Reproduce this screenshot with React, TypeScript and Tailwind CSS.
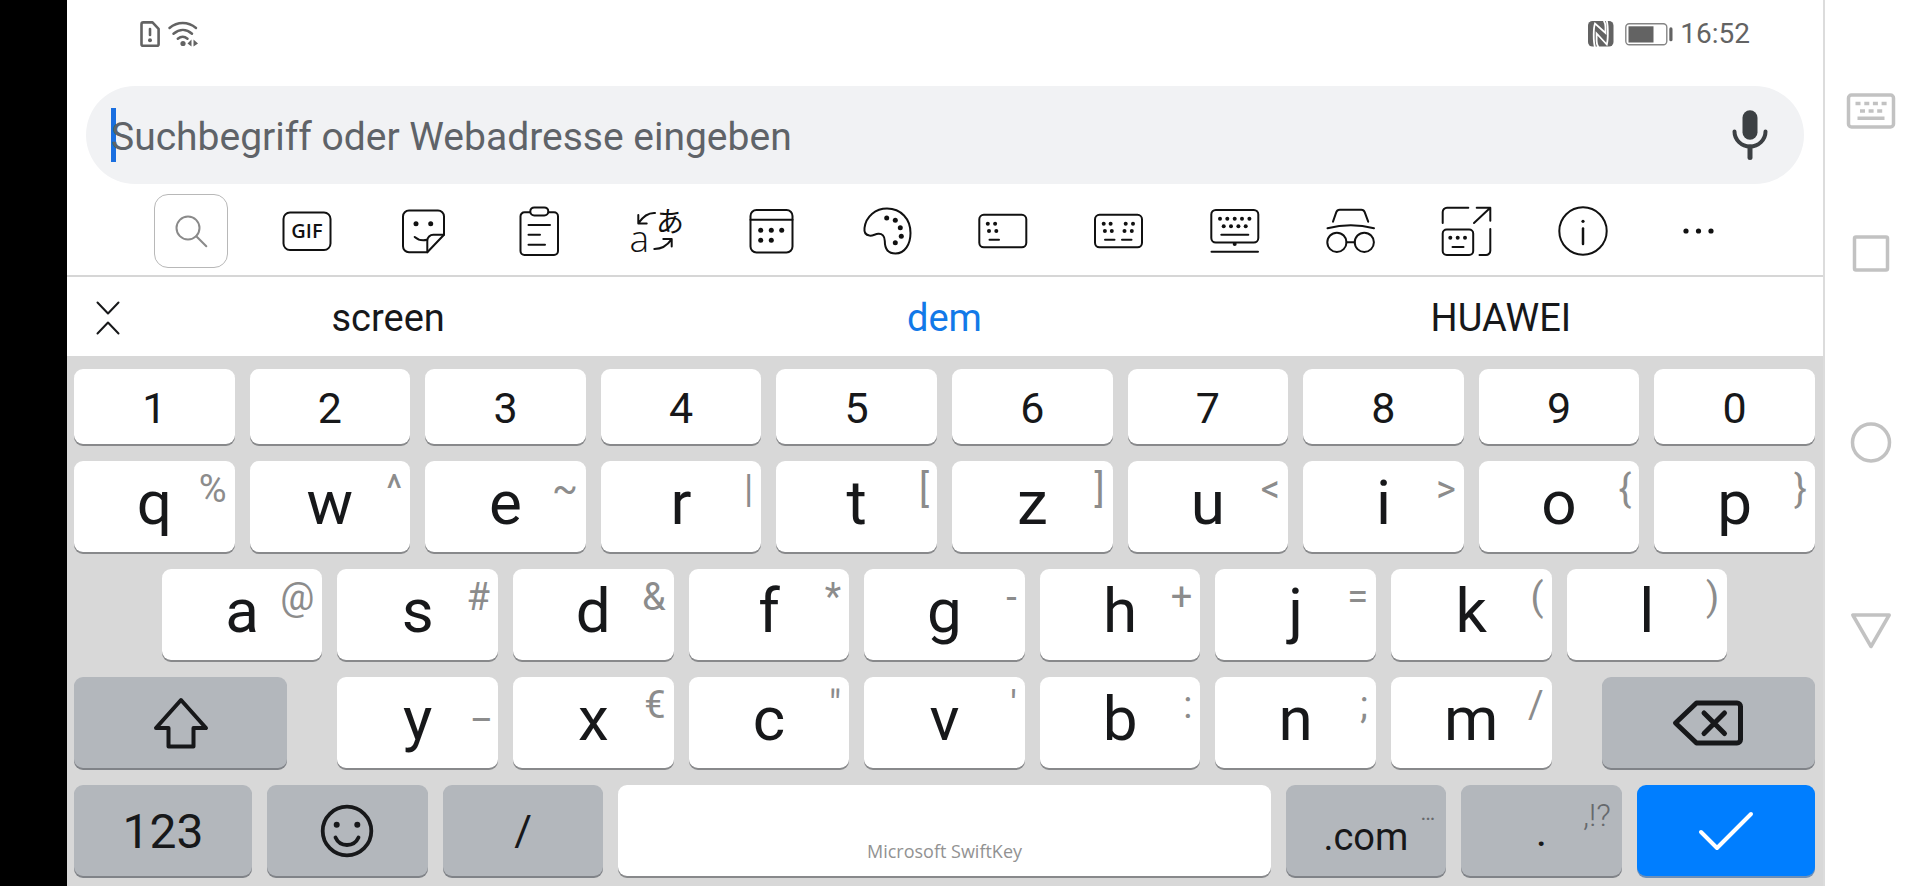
import type { ReactNode } from "react";

type Hint = { text: string; className?: string };

function Icon({ w = 54, h = 54, sw = 2, children }: { w?: number; h?: number; sw?: number; children: ReactNode }) {
  return (
    <svg
      width={w}
      height={h}
      viewBox={`0 0 ${w} ${h}`}
      fill="none"
      stroke="currentColor"
      strokeWidth={sw}
      strokeLinecap="round"
      strokeLinejoin="round"
      aria-hidden="true"
      className="shrink-0 overflow-visible"
    >
      {children}
    </svg>
  );
}

function Dots({ points, r = 2 }: { points: number[][]; r?: number }) {
  return (
    <g fill="currentColor" stroke="none">
      {points.map(([x, y]) => (
        <circle key={`${x}-${y}`} cx={x} cy={y} r={r} />
      ))}
    </g>
  );
}

const tools: { label: string; icon: ReactNode }[] = [
  {
    label: "GIF",
    icon: (
      <Icon>
        <rect x="3.5" y="8.5" width="47" height="37.5" rx="6.5" />
        <text
          x="27"
          y="34.2"
          textAnchor="middle"
          fill="currentColor"
          stroke="none"
          className="font-['Open_Sans',sans-serif] text-[20px] font-semibold"
        >
          GIF
        </text>
      </Icon>
    ),
  },
  {
    label: "Sticker",
    icon: (
      <Icon>
        <path d="M31.3 48.3H13a6 6 0 0 1-6-6V12.5a6 6 0 0 1 6-6h29a6 6 0 0 1 6 6v18.3z" />
        <path d="M48 30.8H37.3a6 6 0 0 0-6 6v11.5" />
        <path d="M18.7 33c3 2.6 7.5 4 12.3 2.8" />
        <Dots points={[[20, 19.7], [34.7, 19.7]]} r={2.5} />
      </Icon>
    ),
  },
  {
    label: "Zwischenablage",
    icon: (
      <Icon>
        <path d="M18 8.3h-5.5a4 4 0 0 0-4 4V47a4 4 0 0 0 4 4h29.5a4 4 0 0 0 4-4V12.3a4 4 0 0 0-4-4h-5.5" />
        <rect x="18.3" y="3.4" width="18" height="8" rx="4" />
        <path d="M16.5 21H38M16.5 30.7H28M16.5 40.7H33" />
      </Icon>
    ),
  },
  {
    label: "Übersetzer",
    icon: (
      <Icon>
        <text
          x="1.5"
          y="47.7"
          fill="currentColor"
          stroke="none"
          className="font-['Open_Sans',sans-serif] text-[37px] leading-none font-light"
        >
          a
        </text>
        <text
          x="42"
          y="28"
          textAnchor="middle"
          fill="currentColor"
          stroke="none"
          className="font-['Noto_Sans_CJK_JP',sans-serif] text-[28px] leading-none"
        >
          あ
        </text>
        <path d="M27 9C19 8.5 14 14 10.6 19M10.3 11v8.5h8.4" />
        <path d="M26.3 45c8 0 13-3.5 17.2-9.600M35.3 35h8.4v7.5" />
      </Icon>
    ),
  },
  {
    label: "Kalender",
    icon: (
      <Icon>
        <rect x="6.5" y="6" width="42" height="42.5" rx="6" />
        <path d="M6.5 15.7h42" />
        <Dots points={[[16.7, 26.3], [27.3, 26.3], [37.7, 26.3], [16.7, 36.3], [27.3, 36.3]]} r={2.5} />
      </Icon>
    ),
  },
  {
    label: "Designs",
    icon: (
      <Icon>
        <path d="M4.5 24C6 12 16 4.5 27 4.5c14 0 23.5 10.5 23.5 24.5 0 11-5.5 20.5-15 20.5-8.5 0-10.7-6.5-10.7-12.5 0-5-2.8-7.5-6.5-7.2-3.3.2-5.3 2.2-8.8 1.800-4-.6-5.5-3.6-5-7.6z" />
        <Dots points={[[26.7, 14], [35.3, 16.3], [40.3, 23.7], [41.3, 32.3], [35.3, 38.7]]} r={2.5} />
      </Icon>
    ),
  },
  {
    label: "Einhandmodus",
    icon: (
      <Icon>
        <rect x="3.3" y="10.8" width="47" height="32.5" rx="4.5" />
        <Dots points={[[11.8, 19.7], [19.1, 19.7], [13, 27], [20.3, 27]]} />
        <path d="M13.5 35.7h9.5" />
      </Icon>
    ),
  },
  {
    label: "Geteilte Tastatur",
    icon: (
      <Icon>
        <rect x="3" y="10.8" width="47" height="32.5" rx="4.5" />
        <Dots
          points={[[11.7, 19.7], [18.6, 19.7], [33.7, 19.7], [41, 19.7], [12.9, 27], [19.8, 27], [32.5, 27], [39.8, 27]]}
        />
        <path d="M13 35.7h9.5M30 35.7h9.5" />
      </Icon>
    ),
  },
  {
    label: "Tastaturlayout",
    icon: (
      <Icon>
        <rect x="3.3" y="6" width="47" height="32.5" rx="4.5" />
        <Dots
          points={[[12, 14.7], [19.3, 14.7], [26.7, 14.7], [34, 14.7], [41.4, 14.7], [15.7, 22.3], [23, 22.3], [30.4, 22.3], [37.7, 22.3], [26.7, 40]]}
        />
        <path d="M13.3 30.7h27M3.5 47.7h46.5" />
      </Icon>
    ),
  },
  {
    label: "Inkognito",
    icon: (
      <Icon>
        <path d="M9 17.7l3.3-9.5a3.6 3.6 0 0 1 3.4-2.4h21.6a3.6 3.6 0 0 1 3.4 2.4l3.5 9.5" />
        <path d="M3.5 24.3c15-3.8 31.5-3.8 46.5 0" />
        <circle cx="12.9" cy="38.3" r="9.6" />
        <circle cx="40.3" cy="38.3" r="9.6" />
        <path d="M22.5 38.3h8.2" />
      </Icon>
    ),
  },
  {
    label: "Größe ändern",
    icon: (
      <Icon>
        <path d="M2.7 19V8a4.3 4.3 0 0 1 4.3-4.3h21.3M36.7 3.7h13.6v13M50 4L34 19M50.3 25v21.7a4.3 4.3 0 0 1-4.3 4.3h-6.5" />
        <rect x="2.7" y="25.5" width="30.5" height="25.5" rx="4" />
        <Dots points={[[10.3, 33.7], [17.7, 33.7], [25, 33.7]]} />
        <path d="M12.5 43h11" />
      </Icon>
    ),
  },
  {
    label: "Info",
    icon: (
      <Icon>
        <circle cx="27" cy="27" r="23.7" />
        <path d="M27 24.5v15.5" strokeWidth="2.5" />
        <Dots points={[[27, 17.3]]} r={1.6} />
      </Icon>
    ),
  },
  {
    label: "Mehr",
    icon: (
      <Icon>
        <Dots points={[[14, 27], [26.5, 27], [39, 27]]} r={2.6} />
      </Icon>
    ),
  },
];

const keyBase = "relative flex h-full w-full items-center justify-center rounded-[9px] leading-none";
const keyTone = {
  light: "bg-white text-[#17181a] shadow-[0_2px_0_#88898b]",
  dark: "bg-[#b3b7bc] text-[#17181a] shadow-[0_2px_0_#808388]",
  accent: "bg-[#007eff] text-white shadow-[0_2px_0_#6d8fb8]",
};

function Key({
  width = "w-[10%]",
  tone = "light",
  label,
  hint,
  className = "",
  children,
}: {
  width?: string;
  tone?: keyof typeof keyTone;
  label?: string;
  hint?: Hint;
  className?: string;
  children: ReactNode;
}) {
  return (
    <div className={`${width} pr-2 pl-[7px]`}>
      <button type="button" aria-label={label} className={`${keyBase} ${keyTone[tone]} ${className}`}>
        {children}
        {hint && (
          <span className={`absolute ${hint.className ?? "top-[9px] right-2 text-[38px] text-[#8c8c8c]"}`}>
            {hint.text}
          </span>
        )}
      </button>
    </div>
  );
}

function LetterKeys({ letters, hints, width }: { letters: string; hints: string; width?: string }) {
  return (
    <>
      {letters.split("").map((letter, i) => (
        <Key key={letter} width={width} hint={{ text: hints[i] }} className="pb-[7px] text-[62px]">
          {letter}
        </Key>
      ))}
    </>
  );
}

function StatusBar() {
  return (
    <header className="flex h-[66px] items-center justify-between px-[73px] pt-0.5 text-[#636363]">
      <div className="flex items-center gap-2">
        <Icon w={20} h={26} sw={2.6}>
          <path d="M3.3 1.4h9.2l6.1 6.4v15.4a1.5 1.5 0 0 1-1.5 1.5H3a1.5 1.5 0 0 1-1.5-1.5V3.2a1.8 1.8 0 0 1 1.800-1.8z" />
          <path d="M10 8v6" />
          <Dots points={[[10, 19.3]]} />
        </Icon>
        <Icon w={30} h={26} sw={2.5}>
          <path d="M1.5 7c8-6.6 18.500-6.6 26.500 0M5.5 12.7c6-4.9 12.9-4.9 18.500 0M9.8 17.7c3.300-2.7 6.500-2.7 9.700 0" />
          <Dots points={[[15, 22.5]]} r={2.6} />
          <path d="M19.5 22.5l4-4v7zM30 22.5l-4.5-4v7z" fill="currentColor" stroke="none" />
        </Icon>
      </div>
      <div className="flex items-center">
        <svg width="26" height="26" viewBox="0 0 26 26" aria-hidden="true">
          <rect width="25.5" height="25.5" rx="4.5" fill="#636363" />
          <g fill="none" stroke="#fff" strokeWidth="1.8">
            <path d="M7 26C5.3 21 5.3 7 7 2.5l10.5 9.500V6C17.500 3 17 1.500 15.500-1" />
            <path d="M18.500-1c1.700 5 1.700 19 .3 24.500L8.600 12.500V20c0 3 .6 4.500 2 6.500" />
          </g>
        </svg>
        <svg width="48" height="23" viewBox="0 0 48 23" className="ml-[11px]" aria-hidden="true">
          <rect x="0.8" y="0.8" width="41" height="21" rx="3.5" fill="none" stroke="#858585" strokeWidth="1.4" />
          <rect x="3.5" y="3.3" width="25" height="16.2" fill="#636363" />
          <rect x="44.3" y="4.3" width="3.2" height="14" rx="1.6" fill="#636363" />
        </svg>
        <time className="ml-[7px] text-[28px] leading-none">16:52</time>
      </div>
    </header>
  );
}

function NavBar() {
  return (
    <nav
      aria-label="Navigation"
      className="flex w-[97px] shrink-0 flex-col items-center border-l-2 border-[#dcdcdc] bg-white pt-[93px] pr-[3px] text-[#c2c2c2]"
    >
      <button type="button" aria-label="Tastatur wechseln">
        <Icon w={50} h={36} sw={3.5}>
          <rect x="2.5" y="2" width="45" height="32" rx="3" />
          <g fill="currentColor" stroke="none">
            <path d="M9.5 8.7h5v3.600h-5zM18.3 8.7h5v3.600h-5zM26.9 8.7h5v3.600h-5zM35.6 8.7h5v3.600h-5zM14 16.2h5v3.600h-5zM22.6 16.2h5v3.600h-5zM31.2 16.2h5v3.600h-5zM11.5 23.5h27v3.600h-27z" />
          </g>
        </Icon>
      </button>
      <button type="button" aria-label="Letzte Apps" className="mt-[106px]">
        <Icon w={38} h={37} sw={3.5}>
          <rect x="2.5" y="2" width="33" height="33" rx="1.5" />
        </Icon>
      </button>
      <button type="button" aria-label="Startbildschirm" className="mt-[150px]">
        <Icon w={42} h={41} sw={3.5}>
          <circle cx="21" cy="20.5" r="18.5" />
        </Icon>
      </button>
      <button type="button" aria-label="Zurück" className="mt-[150px]">
        <Icon w={42} h={36} sw={3.5}>
          <path d="M2.8 2h36.4L21 33.5z" />
        </Icon>
      </button>
    </nav>
  );
}

const row = "flex h-[91px]";

export default function App() {
  return (
    <div className="flex min-h-screen bg-white font-[Roboto,sans-serif]">
      <div className="w-[67px] shrink-0 bg-black" />
      <main className="flex min-w-0 flex-1 flex-col">
        <StatusBar />

        <div className="relative mx-[19px] mt-5 flex h-[98px] items-center rounded-full bg-[#f1f2f4] pr-9 pl-[25px]">
          <span className="absolute top-[22px] left-[25px] h-[54px] w-[5px] bg-[#1a6fe0]" />
          <input
            type="text"
            aria-label="Suchbegriff oder Webadresse eingeben"
            placeholder="Suchbegriff oder Webadresse eingeben"
            className="relative min-w-0 flex-1 bg-transparent pt-1 text-[39px] text-[#5f6368] outline-none placeholder:text-[#5f6368]"
          />
          <button type="button" aria-label="Sprachsuche" className="text-[#3c4043]">
            <Icon w={36} h={50} sw={4}>
              <rect x="10.5" y="0.3" width="15" height="29.5" rx="7.5" fill="currentColor" stroke="none" />
              <path d="M2.5 21.5a15.5 15 0 0 0 31 0" />
              <path d="M18 37v10.5" strokeWidth="5" />
            </Icon>
          </button>
        </div>

        <div className="grid h-[93px] grid-cols-14 items-center justify-items-center border-b-2 border-[#d6d6d6] px-[66px] pt-[3px] text-[#111]">
          <button
            type="button"
            aria-label="Suchen"
            className="flex size-[74px] items-center justify-center rounded-[14px] border border-[#b8b8b8] text-[#8a8a8a]"
          >
            <Icon>
              <circle cx="24" cy="24" r="11.5" />
              <path d="M32.3 32.3l10 10" />
            </Icon>
          </button>
          {tools.map((tool) => (
            <button key={tool.label} type="button" aria-label={tool.label}>
              {tool.icon}
            </button>
          ))}
        </div>

        <div className="flex h-[79px] pt-[3px] pr-11 text-[38px] text-[#17181a]">
          <button type="button" aria-label="Einklappen" className="z-10 -mr-[39px] flex w-[82px] items-center justify-center">
            <Icon w={24} h={34}>
              <path d="M1.5 1.5L12 12.5l10.5-11M1.5 32.5L12 21.500l10.5 11" />
            </Icon>
          </button>
          <button type="button" className="flex-1">
            screen
          </button>
          <button type="button" className="flex-1 text-[#1279e8]">
            dem
          </button>
          <button type="button" className="flex-1">
            HUAWEI
          </button>
        </div>

        <section aria-label="Bildschirmtastatur" className="flex flex-1 flex-col gap-[17px] bg-[#d8d8d8] pt-[13px] pb-[10px]">
          <div className="flex h-[75px]">
            {"1234567890".split("").map((digit) => (
              <Key key={digit} className="pt-1 text-[43px]">
                {digit}
              </Key>
            ))}
          </div>
          <div className={row}>
            <LetterKeys letters="qwertzuiop" hints="%^~|[]<>{}" />
          </div>
          <div className={`${row} justify-center`}>
            <LetterKeys letters="asdfghjkl" hints="@#&*-+=()" />
          </div>
          <div className={`${row} justify-between`}>
            <Key width="w-[13%]" tone="dark" label="Umschalttaste">
              <Icon w={56} h={52} sw={4}>
                <path d="M28 3l25 28H40.5v18.5h-25V31H3z" />
              </Icon>
            </Key>
            <div className="flex w-[70%]">
              <LetterKeys letters="yxcvbnm" hints={"_€\"':;/"} width="flex-1" />
            </div>
            <Key width="w-[13%]" tone="dark" label="Löschen">
              <Icon w={72} h={46} sw={5}>
                <path d="M24.5 3H65a3.5 3.500 0 0 1 3.500 3.500v33A3.500 3.500 0 0 1 65 43H24.5L3.500 23z" />
                <path d="M32 13l20.500 20.500M52.500 13L32 33.500" />
              </Icon>
            </Key>
          </div>
          <div className={row}>
            <Key width="w-[11%]" tone="dark" className="pt-0.5 text-[48px]">
              123
            </Key>
            <Key tone="dark" label="Emoji">
              <Icon sw={3.8}>
                <circle cx="27" cy="27" r="24.3" />
                <path d="M15.5 33.5c4.500 10 18.500 10 23 0" />
                <Dots points={[[16.7, 20.7], [37.3, 20.7]]} r={3} />
              </Icon>
            </Key>
            <Key tone="dark" className="text-[43px]">
              /
            </Key>
            <Key width="w-[38%]" className="items-end pb-4">
              <span className="font-['Open_Sans',sans-serif] text-[18px] text-[#929292]">Microsoft SwiftKey</span>
            </Key>
            <Key
              tone="dark"
              className="pt-3 text-[38px]"
              hint={{ text: "…", className: "top-[17px] right-[11px] text-[22px] text-[#66696d]" }}
            >
              .com
            </Key>
            <Key
              tone="dark"
              className="pt-0.5 text-[43px]"
              hint={{ text: ",!?", className: "top-[14px] right-[11px] text-[32px] font-light text-[#66696d]" }}
            >
              .
            </Key>
            <Key width="w-[11%]" tone="accent" label="Eingabe">
              <Icon w={56} h={40} sw={4}>
                <path d="M3 21l16 16L53 3" />
              </Icon>
            </Key>
          </div>
        </section>
      </main>
      <NavBar />
    </div>
  );
}
